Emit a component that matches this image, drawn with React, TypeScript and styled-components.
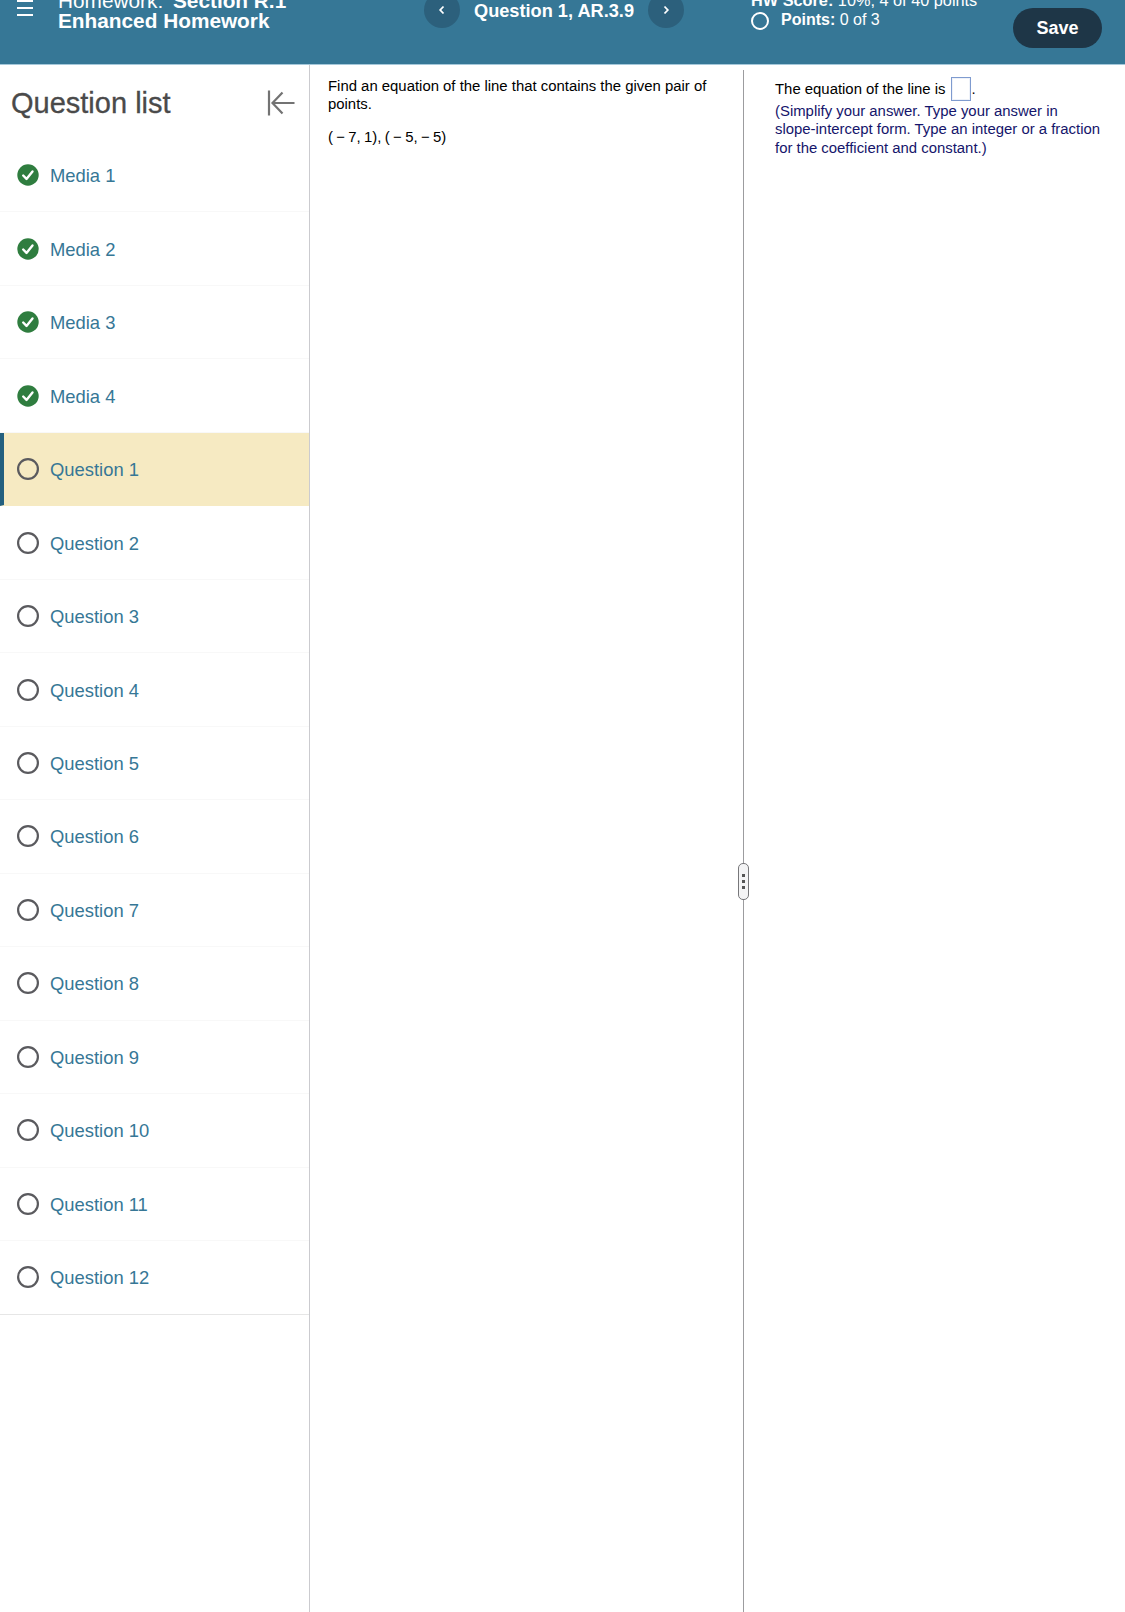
import React from "react";
import styled, { createGlobalStyle } from "styled-components";

const Global = createGlobalStyle`
  html, body { margin: 0; padding: 0; background: #fff; }
  body { font-family: "Liberation Sans", Arial, sans-serif; color: #000; }
`;

const Page = styled.div`
  width: 1125px;
  height: 1612px;
  overflow: hidden;
  display: flex;
  flex-direction: column;
`;

const Header = styled.header`
  height: 65px;
  flex: none;
  box-sizing: border-box;
  background: #367796;
  border-bottom: 1px solid #a5c8da;
  color: #fff;
  display: flex;
  align-items: flex-start;
  overflow: hidden;
  position: relative;
`;

const MenuButton = styled.div`
  width: 58px;
  flex: none;
  margin-top: 0;
  padding-left: 17px;
  box-sizing: border-box;
  display: flex;
  flex-direction: column;
  gap: 5px;
  span {
    display: block;
    width: 16px;
    height: 2px;
    background: #fff;
  }
`;

const TitleBlock = styled.div`
  width: 366px;
  flex: none;
  margin-top: -9px;
  font-size: 20.8px;
  line-height: 20px;
`;

const TitleLine = styled.div`
  white-space: nowrap;
  b {
    font-weight: 700;
  }
`;

const TitleGap = styled.span`
  display: inline-block;
  width: 4px;
`;

const NavBlock = styled.div`
  width: 327px;
  flex: none;
  display: flex;
  align-items: center;
  margin-top: -8px;
`;

const NavButton = styled.div`
  width: 36px;
  height: 36px;
  border-radius: 50%;
  background: #2c607c;
  display: flex;
  align-items: center;
  justify-content: center;
  flex: none;
`;

const NavTitle = styled.div`
  width: 188px;
  text-align: center;
  font-size: 18.2px;
  font-weight: 700;
  white-space: nowrap;
  position: relative;
  top: 1px;
`;

const ScoreBlock = styled.div`
  width: 260px;
  flex: none;
  margin-top: -10px;
  font-size: 16.3px;
  line-height: 20px;
  white-space: nowrap;
  b {
    font-weight: 700;
  }
`;

const ScoreLine = styled.div`
  height: 20px;
`;

const PointsLine = styled.div`
  display: flex;
  align-items: center;
  gap: 12px;
  height: 22px;
  font-size: 16px;
  span {
    position: relative;
    top: -1px;
  }
`;

const SaveButton = styled.div`
  position: absolute;
  left: 1013px;
  top: 8px;
  width: 89px;
  height: 40px;
  border-radius: 20px;
  background: #1e3647;
  display: flex;
  align-items: center;
  justify-content: center;
  font-size: 18px;
  font-weight: 700;
`;

const Body = styled.div`
  flex: 1;
  display: flex;
  min-height: 0;
`;

const Sidebar = styled.aside`
  width: 310px;
  flex: none;
  box-sizing: border-box;
  border-right: 1px solid #cbcbcf;
`;

const SidebarHead = styled.div`
  height: 74px;
  box-sizing: border-box;
  display: flex;
  align-items: center;
  justify-content: space-between;
  padding: 0 14px 0 11px;
`;

const SidebarTitle = styled.h2`
  margin: 0;
  font-size: 29px;
  font-weight: 400;
  color: #4a4a4a;
  -webkit-text-stroke: 0.3px #4a4a4a;
  position: relative;
  top: 1px;
`;

const CollapseWrap = styled.div`
  display: flex;
  position: relative;
  top: 1px;
`;

const List = styled.div`
  display: flex;
  flex-direction: column;
`;

const Row = styled.div<{ $active?: boolean; $last?: boolean }>`
  height: 73.47px;
  box-sizing: border-box;
  display: flex;
  align-items: center;
  gap: 11px;
  font-size: 18.4px;
  color: #367796;
  background: ${(p) => (p.$active ? "#f6eac2" : "transparent")};
  border-left: ${(p) => (p.$active ? "4px solid #24607f" : "none")};
  padding-left: ${(p) => (p.$active ? "13px" : "17px")};
  border-bottom: 1px solid ${(p) => (p.$active ? "#f6eac2" : p.$last ? "#e6e6e6" : "#f8f8f8")};
`;

const RowLabel = styled.span`
  padding-top: 2px;
`;

const Question = styled.section`
  width: 433px;
  flex: none;
  box-sizing: border-box;
  padding: 12px 20px 0 18px;
  font-size: 14.9px;
  line-height: 18px;
`;

const Prompt = styled.p`
  margin: 0 0 15px;
`;

const Points = styled.p`
  margin: 0;
  word-spacing: -0.8px;
`;

const Divider = styled.div`
  width: 1px;
  flex: none;
  margin-top: 5px;
  background: #9c9c9f;
  position: relative;
`;

const Grip = styled.div`
  position: absolute;
  left: -5px;
  top: 793px;
  width: 11px;
  height: 37px;
  box-sizing: border-box;
  background: #f4f4f5;
  border: 1px solid #77777a;
  border-radius: 5px;
  display: flex;
  flex-direction: column;
  align-items: center;
  justify-content: center;
  gap: 3px;
  span {
    width: 3px;
    height: 3px;
    background: #555;
  }
`;

const Answer = styled.section`
  flex: 1;
  box-sizing: border-box;
  padding: 12px 20px 0 31px;
  font-size: 14.9px;
`;

const AnswerLine = styled.div`
  display: flex;
  align-items: center;
  line-height: 22px;
  height: 24px;
`;

const AnswerBox = styled.span`
  width: 18px;
  height: 22px;
  margin: 0 1px 0 5px;
  border: 1px solid #7f9bcf;
  box-shadow: inset 0 0 0 1px #eef2f9;
`;

const Hint = styled.p`
  margin: 1px 0 0;
  color: #15156b;
  line-height: 18.3px;
`;

const NoBreak = styled.span`
  white-space: nowrap;
`;

const Check = () => (
  <svg width="22" height="22" viewBox="0 0 22 22" style={{ flex: "none" }}>
    <circle cx="11" cy="11" r="10.7" fill="#2f7d3f" />
    <path d="M6.2 11.5l3.3 3.4 6-7.4" fill="none" stroke="#fff" strokeWidth="2.4" strokeLinecap="round" strokeLinejoin="round" />
  </svg>
);

const Ring = ({ color = "#5a5a5e", size = 22, sw = 2.2 }: { color?: string; size?: number; sw?: number }) => (
  <svg width={size} height={size} viewBox={`0 0 ${size} ${size}`} style={{ flex: "none" }}>
    <circle cx={size / 2} cy={size / 2} r={size / 2 - sw / 2} fill="none" stroke={color} strokeWidth={sw} />
  </svg>
);

const Chevron = ({ right }: { right?: boolean }) => (
  <svg width="8" height="10" viewBox="0 0 8 10">
    <path d={right ? "M2.5 1.5L5.8 5 2.5 8.5" : "M5.5 1.5L2.2 5 5.5 8.5"} fill="none" stroke="#fff" strokeWidth="1.8" />
  </svg>
);

const Collapse = () => (
  <svg width="28" height="26" viewBox="0 0 28 26">
    <path d="M2 0.5v25M27.5 13H6M15.5 2.5L5.5 13l10 10.5" fill="none" stroke="#737373" strokeWidth="2.2" />
  </svg>
);

const media = ["Media 1", "Media 2", "Media 3", "Media 4"];
const questions = Array.from({ length: 12 }, (_, i) => `Question ${i + 1}`);

export default function App() {
  return (
    <Page>
      <Global />
      <Header>
        <MenuButton>
          <span />
          <span />
          <span />
        </MenuButton>
        <TitleBlock>
          <TitleLine>
            Homework:
            <TitleGap /> <b>Section R.1</b>
          </TitleLine>
          <TitleLine>
            <b>Enhanced Homework</b>
          </TitleLine>
        </TitleBlock>
        <NavBlock>
          <NavButton>
            <Chevron />
          </NavButton>
          <NavTitle>Question 1, AR.3.9</NavTitle>
          <NavButton>
            <Chevron right />
          </NavButton>
        </NavBlock>
        <ScoreBlock>
          <ScoreLine>
            <b>HW Score:</b> 10%, 4 of 40 points
          </ScoreLine>
          <PointsLine>
            <Ring color="#fff" size={18} sw={2} />
            <span>
              <b>Points:</b> 0 of 3
            </span>
          </PointsLine>
        </ScoreBlock>
        <SaveButton>Save</SaveButton>
      </Header>
      <Body>
        <Sidebar>
          <SidebarHead>
            <SidebarTitle>Question list</SidebarTitle>
            <CollapseWrap>
              <Collapse />
            </CollapseWrap>
          </SidebarHead>
          <List>
            {media.map((m) => (
              <Row key={m}>
                <Check />
                <RowLabel>{m}</RowLabel>
              </Row>
            ))}
            {questions.map((q, i) => (
              <Row key={q} $active={i === 0} $last={i === 11}>
                <Ring />
                <RowLabel>{q}</RowLabel>
              </Row>
            ))}
          </List>
        </Sidebar>
        <Question>
          <Prompt>Find an equation of the line that contains the given pair of points.</Prompt>
          <Points>( − 7, 1), ( − 5, − 5)</Points>
        </Question>
        <Divider>
          <Grip>
            <span />
            <span />
            <span />
          </Grip>
        </Divider>
        <Answer>
          <AnswerLine>
            The equation of the line is
            <AnswerBox />.
          </AnswerLine>
          <Hint>
            (Simplify your answer. Type your answer in <NoBreak>slope-intercept</NoBreak> form. Type an integer or a
            fraction for the coefficient and constant.)
          </Hint>
        </Answer>
      </Body>
    </Page>
  );
}
